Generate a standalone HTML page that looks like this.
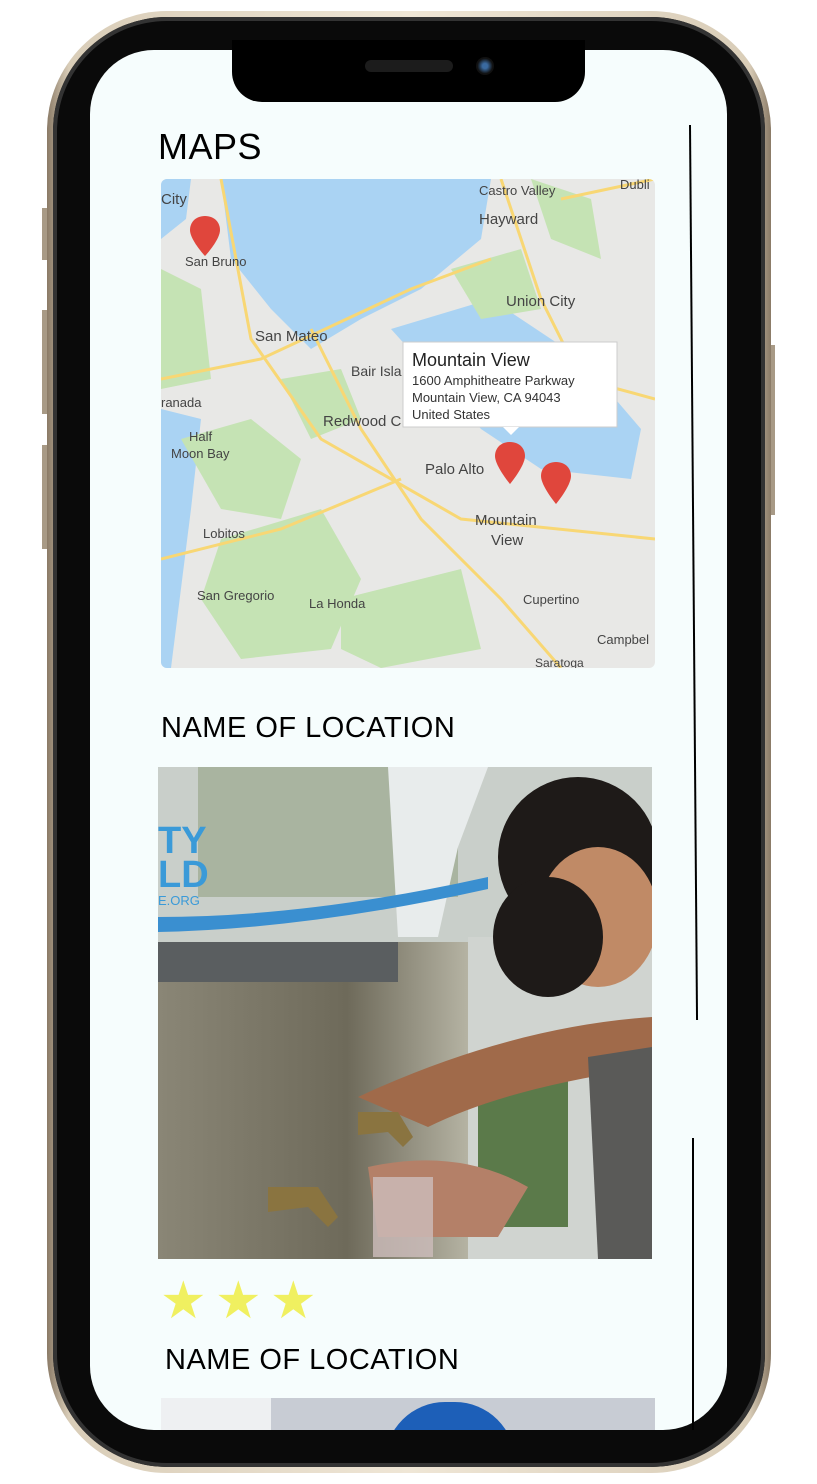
<!DOCTYPE html>
<html><head><meta charset="utf-8"><style>
*{margin:0;padding:0;box-sizing:border-box}
body{width:817px;height:1484px;background:#fff;position:relative;overflow:hidden;font-family:"Liberation Sans",sans-serif}
.rim{position:absolute;left:47px;top:11px;width:724px;height:1462px;border-radius:120px;background:linear-gradient(90deg,#8a7a66,#d9cdb8 3%,#efe6d6 50%,#d9cdb8 97%,#8a7a66)}
.bez{position:absolute;left:53px;top:17px;width:712px;height:1450px;border-radius:114px;background:#0a0a0a;box-shadow:inset 0 0 0 4px #333}
.screen{position:absolute;left:90px;top:50px;width:637px;height:1380px;border-radius:64px;background:#f6fdfd;overflow:hidden}
.notch{position:absolute;left:232px;top:40px;width:353px;height:62px;background:#000;border-radius:0 0 30px 30px}
.spk{position:absolute;left:365px;top:60px;width:88px;height:12px;border-radius:6px;background:#1c1c1c}
.cam{position:absolute;left:476px;top:57px;width:18px;height:18px;border-radius:50%;background:radial-gradient(circle,#3a6aa0 20%,#111 60%)}
h2{position:absolute;font-weight:normal;color:#000;letter-spacing:0.5px}
.star{position:absolute;top:1275px;color:#f0f060;font-size:52px;line-height:1}
.btn{position:absolute;background:#a89a86}
</style></head><body>
<div class="btn" style="left:42px;top:208px;width:6px;height:52px"></div>
<div class="btn" style="left:42px;top:310px;width:6px;height:104px"></div>
<div class="btn" style="left:42px;top:445px;width:6px;height:104px"></div>
<div class="btn" style="left:769px;top:345px;width:6px;height:170px"></div>
<div class="rim"></div>
<div class="bez"></div>
<div class="screen">
<div style="position:absolute;left:71px;top:1348px;width:494px;height:40px;background:#c8ccd4"></div>
<div style="position:absolute;left:71px;top:1348px;width:110px;height:40px;background:#eef0f2"></div>
<div style="position:absolute;left:295px;top:1352px;width:130px;height:60px;border-radius:65px 65px 0 0;background:#1d5fb8"></div>
</div>
<div class="notch"></div><div class="spk"></div><div class="cam"></div>
<h2 style="left:158px;top:126px;font-size:36px">MAPS</h2>
<svg style="position:absolute;left:161px;top:179px;border-radius:6px" width="494" height="489" viewBox="0 0 494 489">
<rect width="494" height="489" fill="#e8e8e6"/>
<path d="M60 0H330 L320 60 L260 110 L200 140 L150 170 L110 130 L70 80Z" fill="#aad3f3"/>
<path d="M230 150 L330 120 L420 180 L480 250 L470 300 L380 290 L320 250Z" fill="#aad3f3"/>
<path d="M0 230 L40 240 L30 330 L10 489 L0 489Z" fill="#aad3f3"/>
<path d="M0 0H30 L25 40 L0 60Z" fill="#aad3f3"/>
<g fill="#c5e3b4">
<path d="M20 260 L90 240 L140 280 L120 340 L60 330Z"/>
<path d="M60 360 L160 330 L200 400 L170 470 L80 480 L40 420Z"/>
<path d="M180 420 L300 390 L320 470 L220 489 L180 470Z"/>
<path d="M0 90 L40 110 L50 200 L0 210Z"/>
<path d="M290 90 L360 70 L380 130 L320 140Z"/>
<path d="M370 0 L430 20 L440 80 L390 60Z"/>
<path d="M120 200 L180 190 L200 240 L150 260Z"/>
</g>
<g stroke="#f8d774" stroke-width="3" fill="none">
<path d="M0 200 L100 180 L250 110 L330 80"/><path d="M60 0 L90 160 L160 260 L300 340 L494 360"/>
<path d="M340 0 L380 120 L420 200 L494 220"/><path d="M150 150 L200 250 L260 340 L340 420 L400 489"/>
<path d="M0 380 L120 350 L240 300"/><path d="M400 20 L494 0"/>
</g>
<g font-size="15" fill="#444" font-family="Liberation Sans">
<text x="0" y="25">City</text><text x="318" y="16" font-size="13">Castro Valley</text><text x="318" y="45">Hayward</text>
<text x="24" y="87" font-size="13">San Bruno</text><text x="345" y="127">Union City</text><text x="94" y="162">San Mateo</text>
<text x="190" y="197" font-size="14">Bair Isla</text><text x="0" y="228" font-size="13">ranada</text><text x="162" y="247">Redwood C</text>
<text x="28" y="262" font-size="13">Half</text><text x="10" y="279" font-size="13">Moon Bay</text><text x="264" y="295">Palo Alto</text>
<text x="42" y="359" font-size="13">Lobitos</text><text x="314" y="346">Mountain</text><text x="330" y="366">View</text>
<text x="36" y="421" font-size="13">San Gregorio</text><text x="148" y="429" font-size="13">La Honda</text><text x="362" y="425" font-size="13">Cupertino</text>
<text x="436" y="465" font-size="13">Campbel</text><text x="374" y="488" font-size="12">Saratoga</text><text x="459" y="10" font-size="13">Dubli</text>
</g>
<path d="M44 37c-10 0-15 7-15 14 0 10 15 26 15 26s15-16 15-26c0-7-5-14-15-14z" fill="#e0463c"/>
<path d="M349 263c-10 0-15 7-15 14 0 10 15 28 15 28s15-18 15-28c0-7-5-14-15-14z" fill="#e0463c"/>
<path d="M395 283c-10 0-15 7-15 14 0 10 15 28 15 28s15-18 15-28c0-7-5-14-15-14z" fill="#e0463c"/>
<rect x="242" y="163" width="214" height="85" fill="#fff" stroke="#ccc"/>
<path d="M342 248l8 8 8-8z" fill="#fff"/>
<g font-family="Liberation Sans" fill="#333"><text x="251" y="187" font-size="18" fill="#222">Mountain View</text>
<text x="251" y="206" font-size="13">1600 Amphitheatre Parkway</text><text x="251" y="223" font-size="13">Mountain View, CA 94043</text><text x="251" y="240" font-size="13">United States</text></g>
</svg>
<h2 style="left:161px;top:712px;font-size:29px">NAME OF LOCATION</h2>
<svg style="position:absolute;left:158px;top:767px" width="494" height="492" viewBox="0 0 494 492">
<defs><linearGradient id="w" x1="0" x2="1"><stop offset="0" stop-color="#8a8676"/><stop offset=".6" stop-color="#6e6a5a"/><stop offset="1" stop-color="#b8b6a6"/></linearGradient></defs>
<rect width="494" height="492" fill="#c9cfca"/>
<rect x="40" y="0" width="260" height="130" fill="#a9b4a0"/>
<path d="M230 0 L330 0 L300 80 L280 170 L240 170Z" fill="#e8ecec"/>
<rect x="0" y="175" width="315" height="317" fill="url(#w)"/>
<rect x="0" y="175" width="240" height="40" fill="#5a5e60"/>
<path d="M0 150 Q150 150 330 110 L330 122 Q150 162 0 165Z" fill="#3a8fd0"/>
<text x="0" y="86" font-family="Liberation Sans" font-weight="bold" font-size="38" fill="#3a9ad8">TY</text>
<text x="0" y="120" font-family="Liberation Sans" font-weight="bold" font-size="38" fill="#3a9ad8">LD</text>
<text x="0" y="138" font-family="Liberation Sans" font-size="13" fill="#3a9ad8">E.ORG</text>
<rect x="310" y="170" width="184" height="322" fill="#d0d4d0"/>
<rect x="320" y="300" width="90" height="160" fill="#5b7a4a"/>
<ellipse cx="420" cy="90" rx="80" ry="80" fill="#1e1a18"/>
<ellipse cx="440" cy="150" rx="60" ry="70" fill="#c08a66"/>
<ellipse cx="390" cy="170" rx="55" ry="60" fill="#1e1a18"/>
<path d="M200 330 Q350 260 494 250 L494 300 Q350 320 270 360Z" fill="#a06a4a"/>
<path d="M430 290 L494 280 L494 492 L440 492Z" fill="#5a5a58"/>
<path d="M210 400 Q300 380 370 420 L340 470 L220 470Z" fill="#b48068"/>
<rect x="215" y="410" width="60" height="80" fill="#cdbdbc" opacity=".8"/>
<path d="M110 420 L160 420 L180 450 L170 460 L150 440 L110 445Z" fill="#8a7440"/>
<path d="M200 345 L240 345 L255 370 L245 380 L230 365 L200 368Z" fill="#8a7440"/>
</svg>
<div class="star" style="left:160px">★</div><div class="star" style="left:215px">★</div><div class="star" style="left:270px">★</div>
<h2 style="left:165px;top:1344px;font-size:29px">NAME OF LOCATION</h2>
<div style="position:absolute;left:689px;top:125px;width:2px;height:895px;background:#000;transform:rotate(-0.45deg);transform-origin:top"></div>
<div style="position:absolute;left:692px;top:1138px;width:2px;height:292px;background:#000"></div>
</body></html>
